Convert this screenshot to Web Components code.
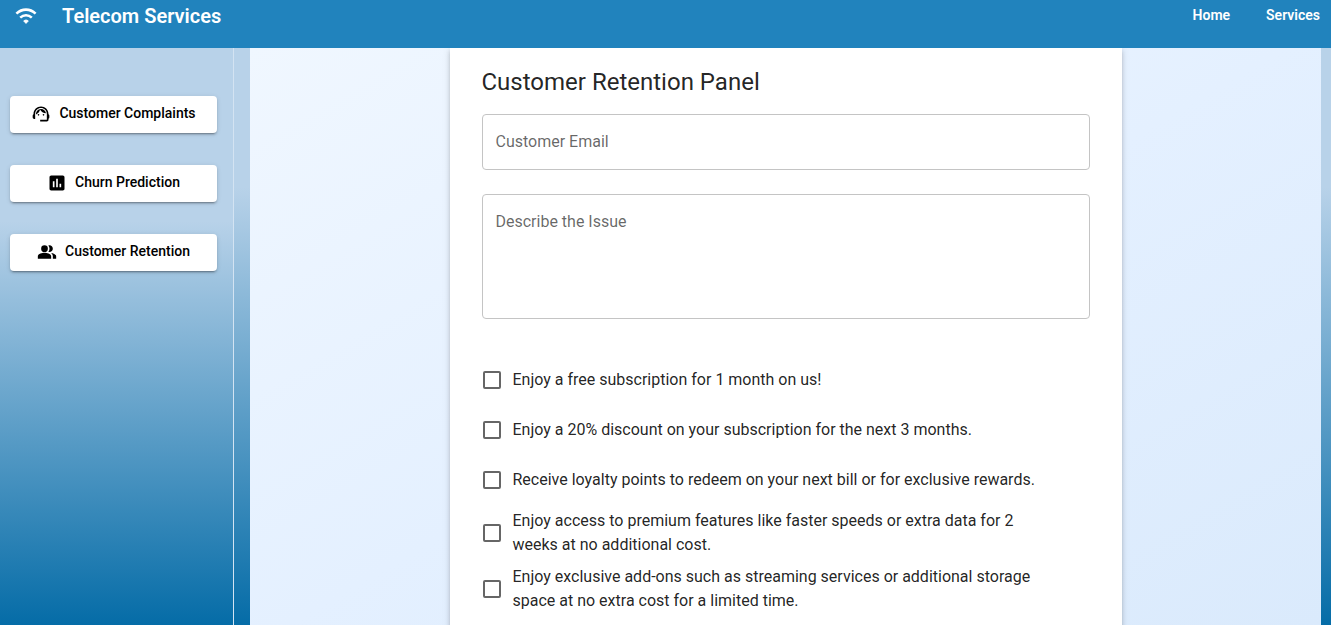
<!DOCTYPE html>
<html lang="en">
<head>
<meta charset="utf-8">
<meta name="viewport" content="width=device-width, initial-scale=1">
<title>Telecom Services</title>
<style>
  html, body { height: 100%; }
  body {
    margin: 0;
    overflow: hidden;
    font: 400 16px/24px Roboto, "Liberation Sans", sans-serif;
    color: rgba(0, 0, 0, 0.87);
  }
</style>
</head>
<body>
<telecom-app></telecom-app>

<template id="app-template">
  <style>
    :host {
      --sky: linear-gradient(180deg, #b8d2e9 30%, #056ca7 100%);
      display: flex;
      flex-direction: column;
      height: 100vh;
      overflow: hidden;
      background: var(--sky);
    }
    .body {
      flex: 1;
      min-height: 0;
      display: flex;
      gap: 16px;
      padding-right: 10px;
    }
    main {
      flex: 1;
      min-width: 0;
      overflow: hidden;
      background: linear-gradient(150deg, #f0f7ff 0%, #e4f0ff 50%, #daeafc 100%);
    }
  </style>
  <app-header>
    Telecom Services
    <nav-link slot="nav" href="#home">Home</nav-link>
    <nav-link slot="nav" href="#services">Services</nav-link>
  </app-header>
  <div class="body">
    <side-bar>
      <side-button icon="agent">Customer Complaints</side-button>
      <side-button icon="chart">Churn Prediction</side-button>
      <side-button icon="people">Customer Retention</side-button>
    </side-bar>
    <main>
      <retention-panel>
        <span slot="title">Customer Retention Panel</span>
        <text-field label="Customer Email"></text-field>
        <text-field label="Describe the Issue" multiline></text-field>
        <check-option slot="offers">Enjoy a free subscription for 1 month on us!</check-option>
        <check-option slot="offers">Enjoy a 20% discount on your subscription for the next 3 months.</check-option>
        <check-option slot="offers">Receive loyalty points to redeem on your next bill or for exclusive rewards.</check-option>
        <check-option slot="offers">Enjoy access to premium features like faster speeds or extra data for 2 weeks at no additional cost.</check-option>
        <check-option slot="offers">Enjoy exclusive add-ons such as streaming services or additional storage space at no extra cost for a limited time.</check-option>
      </retention-panel>
    </main>
  </div>
</template>

<template id="header-template">
  <style>
    :host { display: block; background: #2183bd; color: #fff; }
    header {
      display: flex;
      align-items: center;
      height: 32px;
      padding: 0 11px 16px 14px;
    }
    svg { width: 24px; height: 24px; margin-right: 24px; }
    .title { flex: 1; font-size: 20px; font-weight: 600; line-height: 32px; }
    nav { display: flex; gap: 36px; }
  </style>
  <header>
    <svg viewBox="0 0 24 24" fill="none" stroke="#fff" stroke-width="2.6" aria-hidden="true">
      <path d="M2.4 9.6C8 4.3 16 4.3 21.6 9.6"/>
      <path d="M6.2 13.6c3.4-3.1 8.2-3.1 11.6 0"/>
      <path d="M9.7 16.9c1.4-1.1 3.2-1.1 4.6 0L12 19.4z" fill="#fff" stroke-width="1" stroke-linejoin="round"/>
    </svg>
    <div class="title"><slot></slot></div>
    <nav><slot name="nav"></slot></nav>
  </header>
</template>

<template id="link-template">
  <style>
    :host { display: block; }
    a { display: block; color: inherit; text-decoration: none; font-size: 14px; font-weight: 600; line-height: 30px; padding-bottom: 2px; }
  </style>
  <a><slot></slot></a>
</template>

<template id="sidebar-template">
  <style>
    :host {
      display: block;
      box-sizing: border-box;
      width: 234px;
      padding: 48px 16px 0 10px;
      border-right: 1px solid #d3e3f2;
      background: var(--sky);
    }
    nav { display: flex; flex-direction: column; gap: 32px; }
  </style>
  <nav><slot></slot></nav>
</template>

<template id="side-button-template">
  <style>
    :host { display: block; }
    button {
      display: flex;
      align-items: center;
      justify-content: center;
      gap: 8px;
      width: 100%;
      height: 37px;
      padding: 0 16px 2px;
      border: 0;
      border-radius: 4px;
      background: #fff;
      color: #000;
      font: 500 14px/24px Roboto, "Liberation Sans", sans-serif;
      box-shadow: 0 3px 1px -2px rgba(0,0,0,.2), 0 2px 2px 0 rgba(0,0,0,.14), 0 1px 5px 0 rgba(0,0,0,.12);
      cursor: pointer;
    }
    svg { width: 20px; height: 20px; fill: currentColor; flex: none; }
    .text { padding-bottom: 2px; }
  </style>
  <button type="button">
    <svg viewBox="0 0 24 24" aria-hidden="true"></svg>
    <span class="text"><slot></slot></span>
  </button>
</template>

<template id="panel-template">
  <style>
    :host {
      display: block;
      box-sizing: border-box;
      max-width: 672px;
      min-height: 100%;
      margin: 0 auto;
      padding: 18px 32px 32px;
      background: #fff;
      box-shadow: 0 3px 3px -2px rgba(0,0,0,.2), 0 3px 4px 0 rgba(0,0,0,.14), 0 1px 8px 0 rgba(0,0,0,.12);
    }
    h1 { margin: 0 0 16px; font-size: 24px; font-weight: 400; line-height: 32px; }
    .fields { display: flex; flex-direction: column; gap: 24px; }
    .offers { display: flex; flex-direction: column; gap: 8px; margin-top: 40px; }
  </style>
  <h1><slot name="title"></slot></h1>
  <form>
    <div class="fields"><slot></slot></div>
    <div class="offers"><slot name="offers"></slot></div>
  </form>
</template>

<template id="field-template">
  <style>
    :host { display: grid; }
    label, .control { grid-area: 1 / 1; }
    label { padding: 16px 14px; line-height: 24px; color: rgba(0,0,0,.6); pointer-events: none; z-index: 1; height: 24px; }
    .control {
      box-sizing: border-box;
      width: 100%;
      height: 56px;
      margin: 0;
      padding: 16px 14px;
      border: 1px solid #c4c4c4;
      border-radius: 4px;
      background: transparent;
      font: inherit;
      color: inherit;
      outline: 0;
      resize: none;
    }
    textarea.control { height: 125px; }
    .control:focus { border-color: #1976d2; }
    :host([filled]) label { visibility: hidden; }
  </style>
  <label for="control"></label>
</template>

<template id="check-template">
  <style>
    :host { display: block; }
    label { display: flex; align-items: center; gap: 12px; min-height: 42px; padding: 0 32px 0 1px; cursor: pointer; }
    input {
      appearance: none;
      flex: none;
      box-sizing: border-box;
      width: 18px;
      height: 18px;
      margin: 0;
      border: 2px solid #666;
      border-radius: 2px;
    }
    input:checked { background: #1976d2; border-color: #1976d2; }
  </style>
  <label><input type="checkbox"><span><slot></slot></span></label>
</template>

<script>
  const ICONS = {
    agent: '<path d="M21 12.22C21 6.73 16.74 3 12 3c-4.69 0-9 3.65-9 9.28-.6.34-1 .98-1 1.72v2c0 1.1.9 2 2 2h1v-6.1c0-3.87 3.13-7 7-7s7 3.13 7 7V19h-8v2h8c1.1 0 2-.9 2-2v-1.22c.59-.31 1-.92 1-1.64v-2.3c0-.7-.41-1.31-1-1.62z"/><circle cx="9" cy="13" r="1"/><circle cx="15" cy="13" r="1"/><path d="M18 11.03C17.52 8.18 15.04 6 12.05 6c-3.03 0-6.29 2.51-6.03 6.45 2.47-1.01 4.33-3.21 4.86-5.89 1.31 2.63 4 4.44 7.12 4.47z"/>',
    chart: '<path d="M19 3H5c-1.1 0-2 .9-2 2v14c0 1.1.9 2 2 2h14c1.1 0 2-.9 2-2V5c0-1.1-.9-2-2-2zM9 17H7v-7h2v7zm4 0h-2V7h2v10zm4 0h-2v-4h2v4z"/>',
    people: '<path d="M16.67 13.13C18.04 14.06 19 15.32 19 17v3h4v-3c0-2.18-3.57-3.47-6.33-3.87z"/><circle cx="9" cy="8" r="4"/><path d="M15 12c2.21 0 4-1.79 4-4s-1.79-4-4-4c-.47 0-.91.1-1.33.24C14.5 5.27 15 6.58 15 8s-.5 2.73-1.33 3.76c.42.14.86.24 1.33.24zM9 13c-2.67 0-8 1.34-8 4v3h16v-3c0-2.66-5.33-4-8-4z"/>'
  };

  class TemplateElement extends HTMLElement {
    constructor() {
      super();
      const template = document.getElementById(this.constructor.template);
      this.attachShadow({ mode: 'open' }).append(template.content.cloneNode(true));
    }
  }

  class AppHeader extends TemplateElement { static template = 'header-template'; }

  class NavLink extends TemplateElement {
    static template = 'link-template';
    connectedCallback() {
      this.shadowRoot.querySelector('a').href = this.getAttribute('href');
    }
  }

  class SideBar extends TemplateElement { static template = 'sidebar-template'; }

  class SideButton extends TemplateElement {
    static template = 'side-button-template';
    connectedCallback() {
      this.shadowRoot.querySelector('svg').innerHTML = ICONS[this.getAttribute('icon')];
    }
  }

  class RetentionPanel extends TemplateElement { static template = 'panel-template'; }

  class TextField extends TemplateElement {
    static template = 'field-template';
    connectedCallback() {
      if (this.shadowRoot.querySelector('.control')) return;
      const control = document.createElement(this.hasAttribute('multiline') ? 'textarea' : 'input');
      control.id = 'control';
      control.className = 'control';
      this.shadowRoot.querySelector('label').textContent = this.getAttribute('label');
      control.addEventListener('input', () => this.toggleAttribute('filled', control.value !== ''));
      this.shadowRoot.append(control);
    }
  }

  class CheckOption extends TemplateElement { static template = 'check-template'; }
  class TelecomApp extends TemplateElement { static template = 'app-template'; }

  customElements.define('app-header', AppHeader);
  customElements.define('nav-link', NavLink);
  customElements.define('side-bar', SideBar);
  customElements.define('side-button', SideButton);
  customElements.define('retention-panel', RetentionPanel);
  customElements.define('text-field', TextField);
  customElements.define('check-option', CheckOption);
  customElements.define('telecom-app', TelecomApp);
</script>
</body>
</html>
